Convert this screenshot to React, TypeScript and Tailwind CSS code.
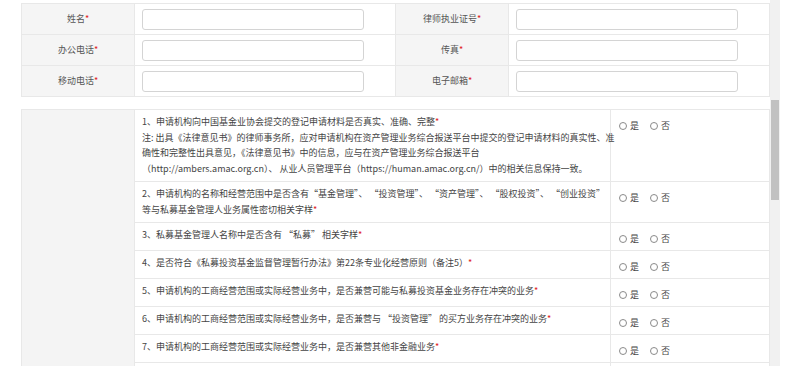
import React from "react";

const Star = () => <span className="text-[#e02020]">*</span>;

function Radios() {
  return (
    <div className="flex h-[16px] items-center text-[9px] text-[#444]">
      <span className="mr-[3px] inline-block h-[8px] w-[8px] rounded-full border border-[#8a8a8a] bg-white" />
      <span>是</span>
      <span className="ml-[11px] mr-[3px] inline-block h-[8px] w-[8px] rounded-full border border-[#8a8a8a] bg-white" />
      <span>否</span>
    </div>
  );
}

function Field({ label }: { label: string }) {
  return (
    <>
      <td className="border border-[#e8e8e8] bg-[#f5f5f5] text-center text-[9px] text-[#555]">
        {label}
        <Star />
      </td>
      <td className="border border-[#e8e8e8] px-[7px] pb-[4px] pt-[5px]">
        <div className="h-[21px] w-[222px] rounded-[3px] border border-[#d4d4d4] bg-white" />
      </td>
    </>
  );
}

const questions: { lines: string[] }[] = [
  {
    lines: [
      "1、申请机构向中国基金业协会提交的登记申请材料是否真实、准确、完整",
      "注: 出具《法律意见书》的律师事务所，应对申请机构在资产管理业务综合报送平台中提交的登记申请材料的真实性、准",
      "确性和完整性出具意见，《法律意见书》中的信息，应与在资产管理业务综合报送平台",
      "（http://ambers.amac.org.cn）、 从业人员管理平台（https://human.amac.org.cn/）中的相关信息保持一致。",
    ],
  },
  {
    lines: [
      "2、申请机构的名称和经营范围中是否含有“基金管理”、 “投资管理”、 “资产管理”、 “股权投资”、 “创业投资”",
      "等与私募基金管理人业务属性密切相关字样",
    ],
  },
  { lines: ["3、私募基金管理人名称中是否含有 “私募” 相关字样"] },
  { lines: ["4、是否符合《私募投资基金监督管理暂行办法》第22条专业化经营原则（备注5）"] },
  { lines: ["5、申请机构的工商经营范围或实际经营业务中，是否兼营可能与私募投资基金业务存在冲突的业务"] },
  { lines: ["6、申请机构的工商经营范围或实际经营业务中，是否兼营与 “投资管理” 的买方业务存在冲突的业务"] },
  { lines: ["7、申请机构的工商经营范围或实际经营业务中，是否兼营其他非金融业务"] },
];

export default function App() {
  return (
    <div className="flex h-[366px] overflow-hidden bg-white font-['Noto_Sans_CJK_SC','Noto_Sans',sans-serif]">
      <div className="w-[21px] shrink-0" />
      <div className="w-[749px] shrink-0 pt-[3px]">
        <table className="w-full table-fixed border-collapse">
          <colgroup>
            <col className="w-[113px]" />
            <col className="w-[261px]" />
            <col className="w-[113px]" />
            <col />
          </colgroup>
          <tbody>
            <tr>
              <Field label="姓名" />
              <Field label="律师执业证号" />
            </tr>
            <tr>
              <Field label="办公电话" />
              <Field label="传真" />
            </tr>
            <tr>
              <Field label="移动电话" />
              <Field label="电子邮箱" />
            </tr>
          </tbody>
        </table>

        <table className="mt-[12px] w-full table-fixed border-collapse">
          <colgroup>
            <col className="w-[113px]" />
            <col className="w-[476px]" />
            <col />
          </colgroup>
          <tbody>
            {questions.map((q, i) => (
              <tr key={i}>
                {i === 0 && (
                  <td rowSpan={questions.length + 1} className="border border-[#e8e8e8] bg-[#f4f4f4]" />
                )}
                <td className="border border-[#e8e8e8] px-[7px] pb-[5px] pt-[4px] align-top text-[9px] leading-[15.5px] text-[#444]">
                  {q.lines.map((l, j) => (
                    <div key={j} className="whitespace-nowrap">
                      {l}
                      {j === 0 && i === 0 && <Star />}
                      {j === q.lines.length - 1 && i > 0 && <Star />}
                    </div>
                  ))}
                </td>
                <td className="border border-[#e8e8e8] pb-[3px] pl-[8px] pt-[8px] align-top">
                  <Radios />
                </td>
              </tr>
            ))}
            {/* next question row, scrolled below the fold */}
            <tr className="h-[28px]">
              <td className="border border-[#e8e8e8]" />
              <td className="border border-[#e8e8e8]" />
            </tr>
          </tbody>
        </table>
      </div>
      <div className="w-[10px] shrink-0 bg-[#f1f1f1]">
        <div className="mx-[1px] mt-[100px] h-[100px] bg-[#c1c1c1]" />
      </div>
    </div>
  );
}
